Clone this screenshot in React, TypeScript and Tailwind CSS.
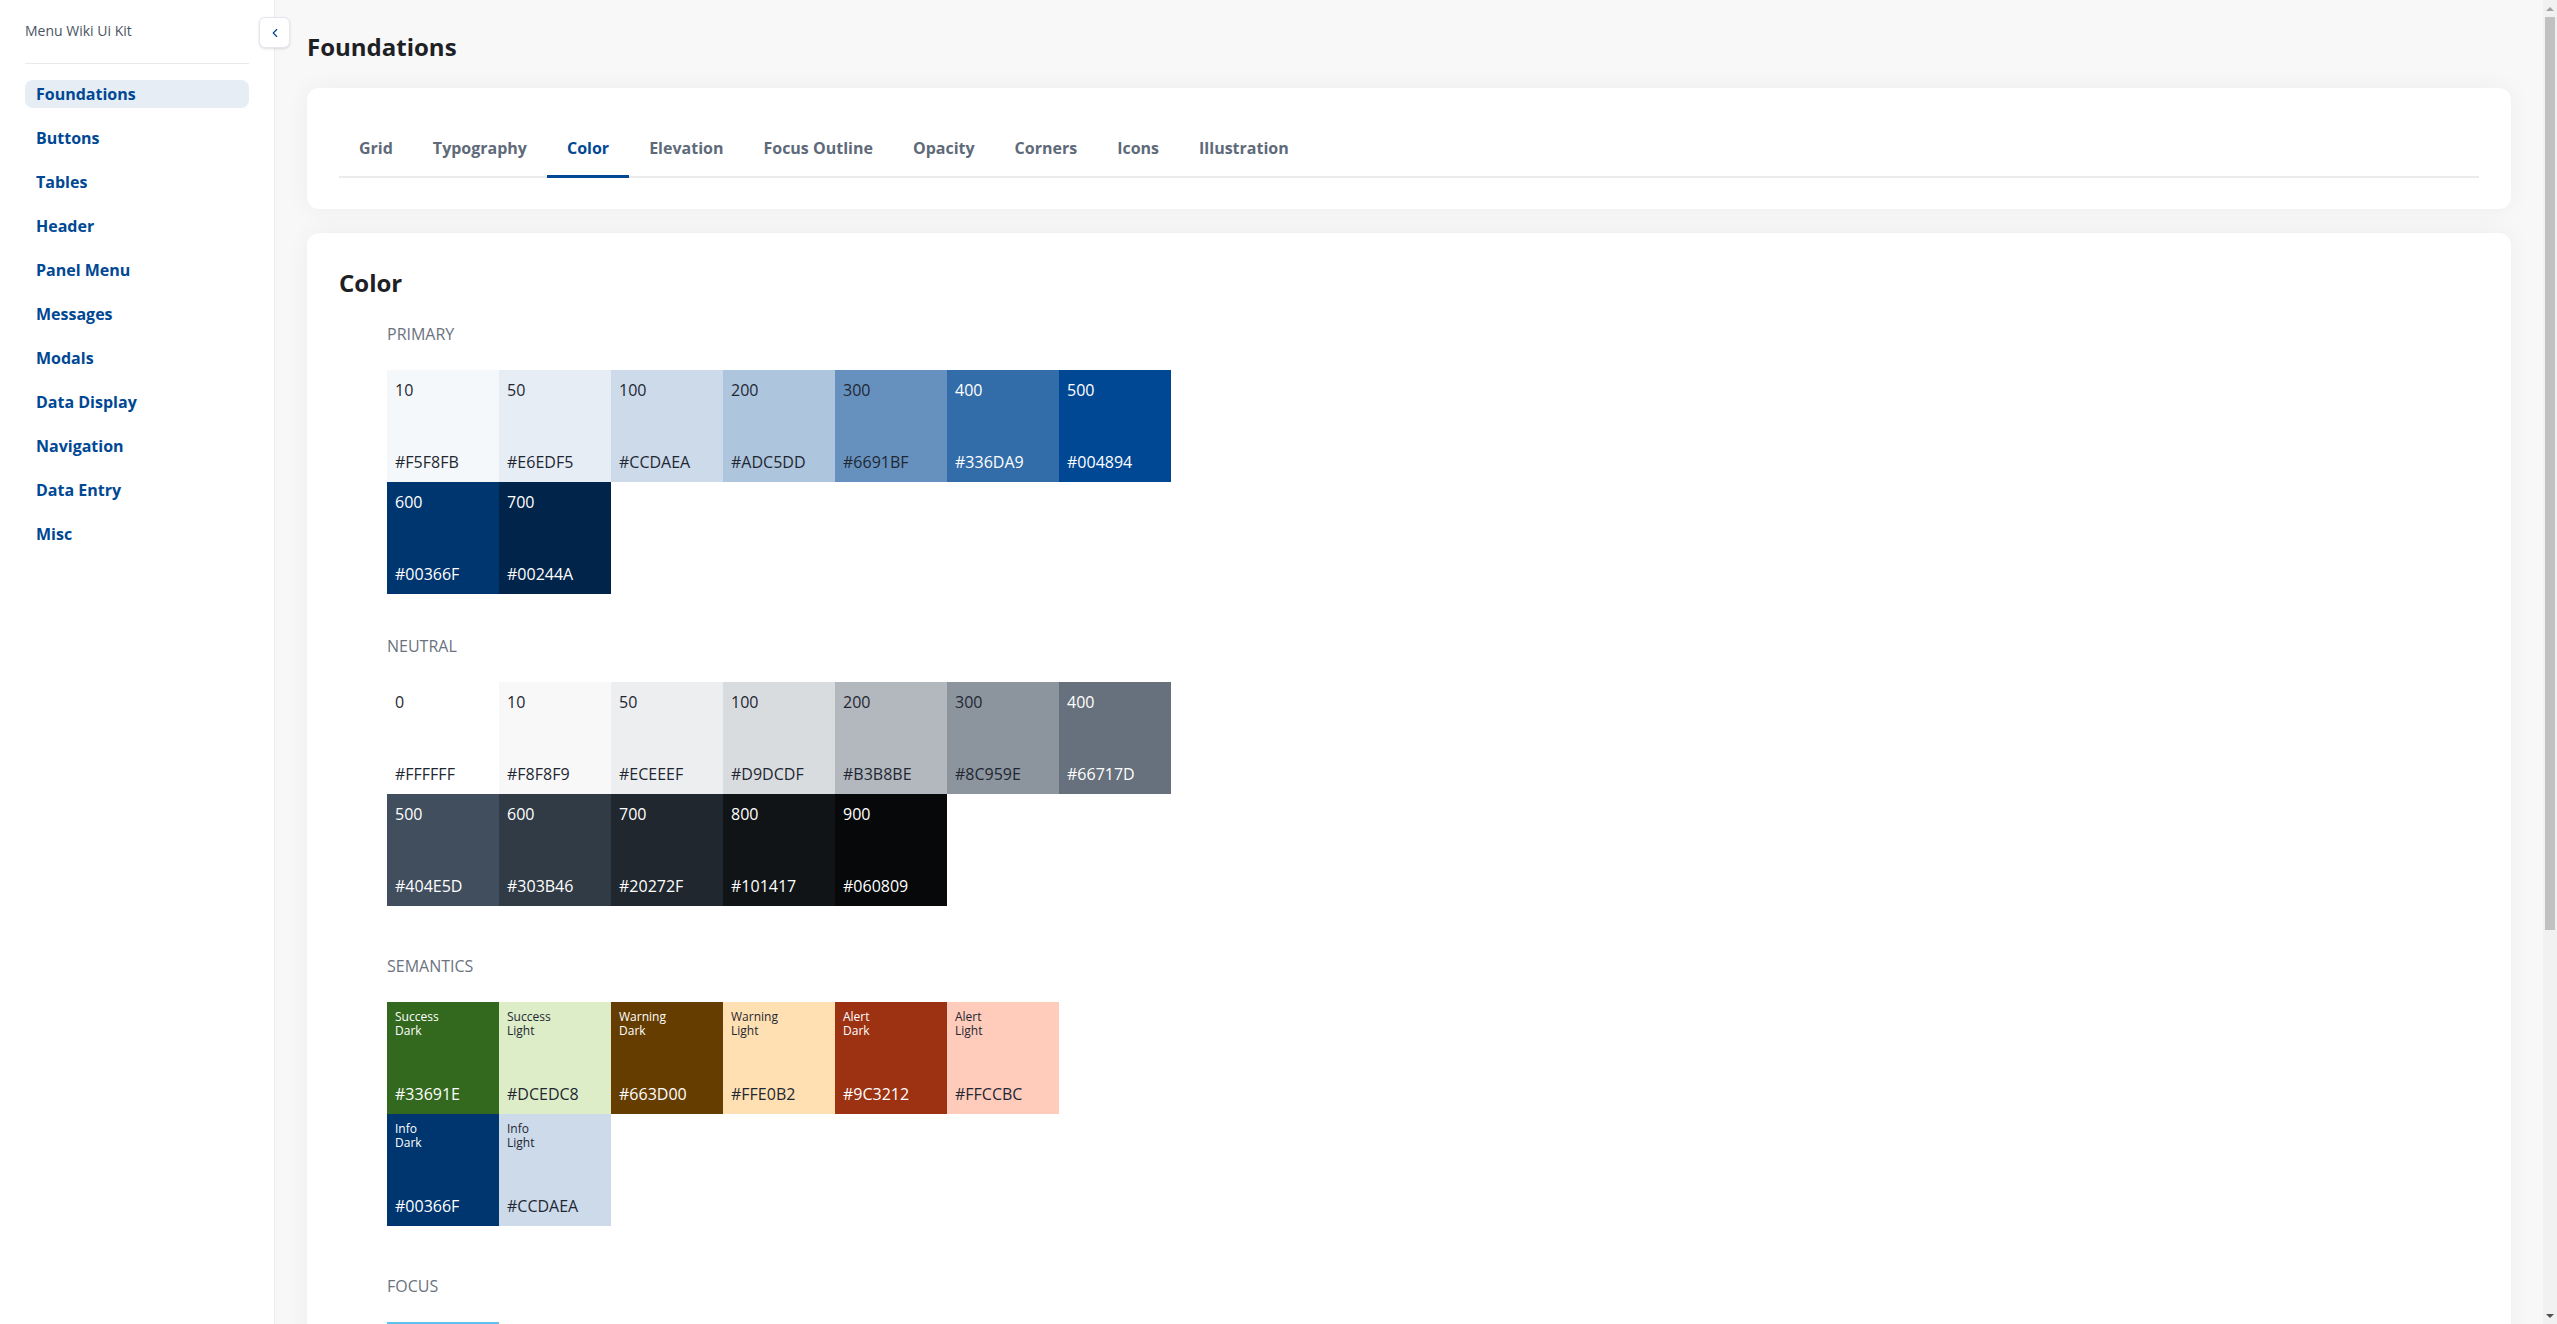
import { ChevronLeft } from "lucide-react";

type Swatch = { label: string; hex: string; dark?: boolean };

const NAV = [
  "Foundations",
  "Buttons",
  "Tables",
  "Header",
  "Panel Menu",
  "Messages",
  "Modals",
  "Data Display",
  "Navigation",
  "Data Entry",
  "Misc",
];

const TABS = ["Grid", "Typography", "Color", "Elevation", "Focus Outline", "Opacity", "Corners", "Icons", "Illustration"];

const PRIMARY: Swatch[] = [
  { label: "10", hex: "#F5F8FB" },
  { label: "50", hex: "#E6EDF5" },
  { label: "100", hex: "#CCDAEA" },
  { label: "200", hex: "#ADC5DD" },
  { label: "300", hex: "#6691BF" },
  { label: "400", hex: "#336DA9", dark: true },
  { label: "500", hex: "#004894", dark: true },
  { label: "600", hex: "#00366F", dark: true },
  { label: "700", hex: "#00244A", dark: true },
];

const NEUTRAL: Swatch[] = [
  { label: "0", hex: "#FFFFFF" },
  { label: "10", hex: "#F8F8F9" },
  { label: "50", hex: "#ECEEEF" },
  { label: "100", hex: "#D9DCDF" },
  { label: "200", hex: "#B3B8BE" },
  { label: "300", hex: "#8C959E" },
  { label: "400", hex: "#66717D", dark: true },
  { label: "500", hex: "#404E5D", dark: true },
  { label: "600", hex: "#303B46", dark: true },
  { label: "700", hex: "#20272F", dark: true },
  { label: "800", hex: "#101417", dark: true },
  { label: "900", hex: "#060809", dark: true },
];

const SEMANTICS: Swatch[] = [
  { label: "Success\nDark", hex: "#33691E", dark: true },
  { label: "Success\nLight", hex: "#DCEDC8" },
  { label: "Warning\nDark", hex: "#663D00", dark: true },
  { label: "Warning\nLight", hex: "#FFE0B2" },
  { label: "Alert\nDark", hex: "#9C3212", dark: true },
  { label: "Alert\nLight", hex: "#FFCCBC" },
  { label: "Info\nDark", hex: "#00366F", dark: true },
  { label: "Info\nLight", hex: "#CCDAEA" },
];

const FOCUS: Swatch[] = [{ label: "Focus", hex: "#5BC2EE" }];

function SwatchBox({ s, small }: { s: Swatch; small?: boolean }) {
  return (
    <div
      className={`w-[112px] h-[112px] p-2 flex flex-col justify-between ${s.dark ? "text-white" : "text-[#1f2733]"}`}
      style={{ backgroundColor: s.hex }}
    >
      {small ? (
        <div className="text-xs leading-[14px] whitespace-pre-line">{s.label}</div>
      ) : (
        <div className="text-base leading-6">{s.label}</div>
      )}
      <div className="text-base leading-6">{s.hex}</div>
    </div>
  );
}

function Section({
  title,
  items,
  small,
  className,
  gridClass = "w-[784px]",
}: {
  title: string;
  items: Swatch[];
  small?: boolean;
  className?: string;
  gridClass?: string;
}) {
  return (
    <section className={className}>
      <div className="text-base leading-6 text-[#6b7380] uppercase">{title}</div>
      <div className={`mt-6 flex flex-wrap ${gridClass}`}>
        {items.map((s) => (
          <SwatchBox key={s.hex + s.label} s={s} small={small} />
        ))}
      </div>
    </section>
  );
}

export default function App() {
  return (
    <div className="flex min-h-screen bg-[#f8f8f8] font-['Open_Sans',sans-serif]">
      {/* Sidebar */}
      <aside className="relative w-[275px] shrink-0 bg-white border-r border-[#ececec] px-[25px]">
        <div className="pt-[21px] pb-[22px] text-sm leading-5 text-[#4b5563] border-b border-[#e8eaed]">
          Menu Wiki Ui Kit
        </div>
        <nav className="mt-4 flex flex-col gap-4">
          {NAV.map((item, i) => (
            <a
              key={item}
              className={`h-7 rounded-lg px-[11px] text-base font-bold leading-7 text-[#004894] ${i === 0 ? "bg-[#e6edf5]" : ""}`}
            >
              {item}
            </a>
          ))}
        </nav>
        <button className="absolute top-[17px] -right-[16px] w-[31px] h-[31px] rounded-md bg-white border border-[#e3e7ee] shadow-sm flex items-center justify-center">
          <ChevronLeft size={14} strokeWidth={2} className="text-[#004894]" />
        </button>
      </aside>

      {/* Main */}
      <main className="flex-1 min-w-0 px-8 pt-[31px] pb-10">
        <h1 className="text-2xl leading-8 font-bold text-[#1d2024]">Foundations</h1>

        <div className="mt-[25px] rounded-xl bg-white shadow-[0_0_24px_rgba(0,0,0,0.05)] px-8 pt-8 pb-[31px]">
          <div className="flex border-b-2 border-[#ebebeb]">
            {TABS.map((t) => (
              <div
                key={t}
                className={`relative px-5 py-4 text-base leading-6 font-bold ${t === "Color" ? "text-[#004894]" : "text-[#5e6a79]"}`}
              >
                {t}
                {t === "Color" && <span className="absolute left-0 right-0 -bottom-[2px] h-[3px] bg-[#004894]" />}
              </div>
            ))}
          </div>
        </div>

        <div className="mt-6 rounded-xl bg-white shadow-[0_0_24px_rgba(0,0,0,0.05)] px-8 pt-[34px] pb-12">
          <h2 className="text-2xl leading-8 font-bold text-[#1d2024]">Color</h2>
          <div className="pl-12 mt-[23px]">
            <Section title="Primary" items={PRIMARY} />
            <Section title="Neutral" items={NEUTRAL} className="mt-10" />
            <Section title="Semantics" items={SEMANTICS} small className="mt-12" gridClass="w-[672px]" />
            <Section title="Focus" items={FOCUS} className="mt-12" />
          </div>
        </div>
      </main>

      {/* Window scrollbar */}
      <div className="w-[14px] shrink-0 bg-[#f1f1f1]">
        <div className="h-screen flex flex-col items-center">
          <div className="h-[17px] flex items-center justify-center">
            <div className="w-0 h-0 border-l-[4px] border-r-[4px] border-b-[4px] border-l-transparent border-r-transparent border-b-[#a3a3a3]" />
          </div>
          <div className="w-[10px] h-[913px] bg-[#c1c1c1]" />
          <div className="flex-1" />
          <div className="h-[17px] flex items-center justify-center">
            <div className="w-0 h-0 border-l-[4px] border-r-[4px] border-t-[4px] border-l-transparent border-r-transparent border-t-[#505050]" />
          </div>
        </div>
      </div>
    </div>
  );
}
